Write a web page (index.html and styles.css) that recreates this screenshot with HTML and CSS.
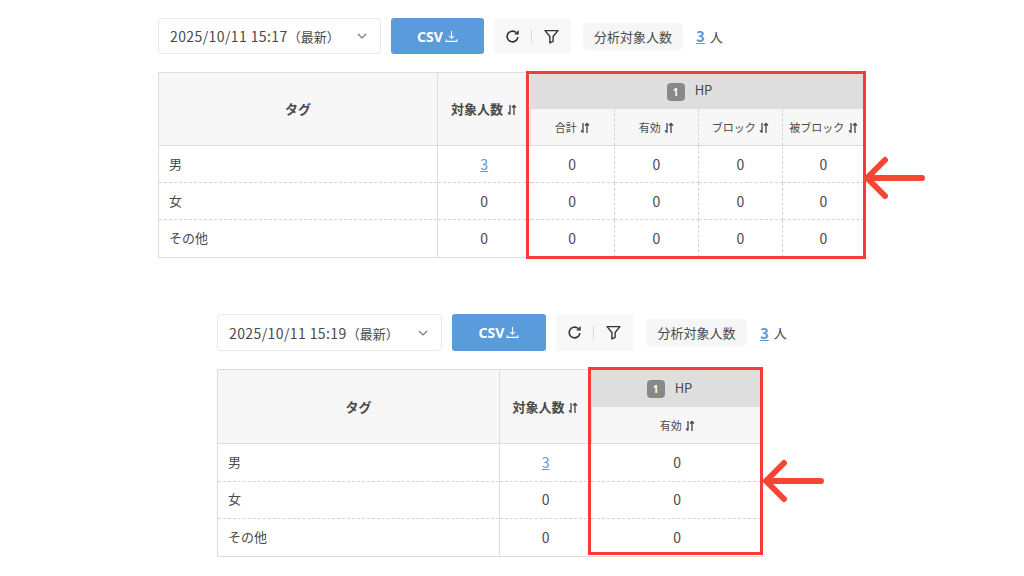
FILE: index.html
```html
<!DOCTYPE html>
<html lang="ja">
<head>
<meta charset="utf-8">
<title>タグ分析</title>
<link rel="stylesheet" href="styles.css">
</head>
<body>
<svg class="defs" aria-hidden="true">
  <symbol id="sort" viewBox="0 0 10 12"><path d="M3 1v9.500M1 8.500l2 2M7 11V1.500M5 3.500l2-2 2 2" fill="none" stroke="currentColor" stroke-width="1.300"/></symbol>
  <symbol id="dl" viewBox="0 0 12 12"><path d="M6 1v6.500M3.800 5.500L6 7.700l2.200-2.200M1 8.500v2h10v-2" fill="none" stroke="currentColor" stroke-width="1"/></symbol>
  <symbol id="chev" viewBox="0 0 10 6"><path d="M1 1l4 4 4-4" fill="none" stroke="currentColor" stroke-width="1.200"/></symbol>
  <symbol id="reload" viewBox="0 0 14 14"><path d="M12 7.500A5 5 0 1 1 10.300 3.200" fill="none" stroke="currentColor" stroke-width="1.500"/><path d="M12.800 1v4.200H8.600z" fill="currentColor"/></symbol>
  <symbol id="filter" viewBox="0 0 14 14"><path d="M1 1.500h12L8.500 7v4.500l-3 1.500V7z" fill="none" stroke="currentColor" stroke-width="1.300" stroke-linejoin="round"/></symbol>
</svg>

<main class="page">
  <section class="panel panel-a">
    <div class="toolbar">
      <div class="select"><span class="date">2025/10/11 15:17<span class="latest">（最新）</span></span><svg class="chev"><use href="#chev"/></svg></div>
      <button class="csv">CSV<svg class="dl"><use href="#dl"/></svg></button>
      <div class="tools"><svg class="tool"><use href="#reload"/></svg><i class="sep"></i><svg class="tool"><use href="#filter"/></svg></div>
      <div class="pill">分析対象人数</div>
      <div class="count"><a class="link">3</a><span>人</span></div>
    </div>
    <table class="grid">
      <colgroup><col class="c-tag"><col class="c-num"><col class="c-m"><col class="c-m"><col class="c-m"><col class="c-last"></colgroup>
      <thead>
        <tr class="r-group">
          <th rowspan="2" class="head tag-head">タグ</th>
          <th rowspan="2" class="head num-head">対象人数 <svg class="sort"><use href="#sort"/></svg></th>
          <th colspan="4" class="group"><span class="badge">1</span><span>HP</span></th>
        </tr>
        <tr class="r-sub">
          <th class="sub">合計 <svg class="sort"><use href="#sort"/></svg></th>
          <th class="sub">有効 <svg class="sort"><use href="#sort"/></svg></th>
          <th class="sub">ブロック <svg class="sort"><use href="#sort"/></svg></th>
          <th class="sub">被ブロック <svg class="sort"><use href="#sort"/></svg></th>
        </tr>
      </thead>
      <tbody>
        <tr><td class="name">男</td><td class="solid"><a class="link">3</a></td><td>0</td><td>0</td><td>0</td><td>0</td></tr>
        <tr><td class="name">女</td><td class="solid">0</td><td>0</td><td>0</td><td>0</td><td>0</td></tr>
        <tr><td class="name">その他</td><td class="solid">0</td><td>0</td><td>0</td><td>0</td><td>0</td></tr>
      </tbody>
    </table>
    <div class="mark mark-a"></div>
    <svg class="arrow arrow-a" viewBox="0 0 64 44"><path d="M60 23H5M23 5L5 23l18 18" fill="none" stroke="#f74535" stroke-width="6" stroke-linecap="round" stroke-linejoin="round"/></svg>
  </section>

  <section class="panel panel-b">
    <div class="toolbar">
      <div class="select"><span class="date">2025/10/11 15:19<span class="latest">（最新）</span></span><svg class="chev"><use href="#chev"/></svg></div>
      <button class="csv">CSV<svg class="dl"><use href="#dl"/></svg></button>
      <div class="tools"><svg class="tool"><use href="#reload"/></svg><i class="sep"></i><svg class="tool"><use href="#filter"/></svg></div>
      <div class="pill">分析対象人数</div>
      <div class="count"><a class="link">3</a><span>人</span></div>
    </div>
    <table class="grid">
      <colgroup><col class="c-tag"><col class="c-num"><col class="c-hp"></colgroup>
      <thead>
        <tr class="r-group">
          <th rowspan="2" class="head tag-head">タグ</th>
          <th rowspan="2" class="head num-head">対象人数 <svg class="sort"><use href="#sort"/></svg></th>
          <th class="group"><span class="badge">1</span><span>HP</span></th>
        </tr>
        <tr class="r-sub"><th class="sub">有効 <svg class="sort"><use href="#sort"/></svg></th></tr>
      </thead>
      <tbody>
        <tr><td class="name">男</td><td class="solid"><a class="link">3</a></td><td>0</td></tr>
        <tr><td class="name">女</td><td class="solid">0</td><td>0</td></tr>
        <tr><td class="name">その他</td><td class="solid">0</td><td>0</td></tr>
      </tbody>
    </table>
    <div class="mark mark-b"></div>
    <svg class="arrow arrow-b" viewBox="0 0 64 44"><path d="M60 23H5M23 5L5 23l18 18" fill="none" stroke="#f74535" stroke-width="6" stroke-linecap="round" stroke-linejoin="round"/></svg>
  </section>
</main>
</body>
</html>
```
FILE: styles.css
```css
* { box-sizing: border-box; }
html, body { margin: 0; padding: 0; background: #fff; }
body {
  width: 1024px;
  height: 576px;
  overflow: hidden;
  font-family: "Noto Sans CJK JP", "Noto Sans", sans-serif;
  color: #4a4a4a;
  font-size: 14px;
}
.defs { position: absolute; width: 0; height: 0; }

.page { display: flex; flex-direction: column; align-items: flex-start; padding-top: 18px; }
.panel { position: relative; }
.panel-a { margin-left: 158px; }
.panel-b { margin-left: 217px; margin-top: 56px; }

.toolbar { display: flex; align-items: center; height: 36px; margin-bottom: 18px; }
.toolbar > * { flex: none; }
.panel-b .toolbar { height: 37px; }

.select {
  display: flex;
  align-items: center;
  justify-content: space-between;
  height: 100%;
  background: #fff;
  border: 1px solid #e8e8e8;
  border-radius: 4px;
  padding: 0 13px 0 11px;
  white-space: nowrap;
}
.date { letter-spacing: 0.4px; }
.latest { font-size: 13px; letter-spacing: 0; }
.panel-a .select { width: 223px; }
.panel-b .select { width: 225px; }
.chev { width: 10px; height: 6px; color: #777; }

.csv {
  display: flex;
  align-items: center;
  justify-content: center;
  height: 100%;
  border: 0;
  border-radius: 3px;
  background: #5a9bdc;
  color: #fff;
  font: 700 14px "Noto Sans", sans-serif;
  margin-left: 10px;
  padding: 0;
}
.panel-a .csv { width: 93px; }
.panel-b .csv { width: 94px; }
.dl { width: 13px; height: 13px; margin-left: 2px; }

.tools {
  display: flex;
  align-items: center;
  width: 77px;
  height: 100%;
  background: #f8f8f8;
  margin-left: 10px;
  padding-left: 11px;
}
.tool { width: 15px; height: 15px; color: #333; }
.sep { width: 1px; height: 13px; background: #d8d8d8; margin: 0 12px 0 11px; }

.pill {
  display: flex;
  align-items: center;
  justify-content: center;
  height: 27px;
  background: #f6f6f6;
  border-radius: 4px;
  font-size: 13px;
}
.panel-a .pill { width: 100px; margin-left: 12px; }
.panel-b .pill { width: 101px; margin-left: 13px; }

.count { display: flex; align-items: center; gap: 5px; margin-left: 13px; font-size: 13px; }
.count .link { font-size: 15px; font-weight: 700; line-height: 18px; }
.link { color: #5a9bdc; text-decoration: underline; }

.grid {
  table-layout: fixed;
  border-collapse: collapse;
  border: 1.500px solid #ddd;
  font-size: 14px;
}
.panel-a .grid { width: 706px; }
.panel-b .grid { width: 544px; }
.panel-a .c-tag { width: 279px; }
.panel-a .c-num { width: 93px; }
.panel-a .c-m { width: 84px; }
.panel-a .c-last { width: 82px; }
.panel-b .c-tag { width: 282px; }
.panel-b .c-num { width: 92px; }
.panel-b .c-hp { width: 170px; }

.r-group { height: 36px; }
.r-sub { height: 37px; }
.panel-b .r-group { height: 37px; }
tbody tr { height: 37px; }
.panel-b tbody tr { height: 37.500px; }
.panel-a tbody tr:last-child { height: 38px; }

th, td { padding: 0; text-align: center; font-weight: 400; }
.head {
  background: #f7f7f7;
  border-right: 1px solid #ddd;
  border-bottom: 1.500px solid #ddd;
  font-weight: 700;
  font-size: 13px;
  padding-bottom: 1px;
}
.group { background: #dedede; font-size: 13px; }
.panel-a .group { padding-right: 16px; }
.panel-b .group { padding-right: 14px; }
.badge {
  display: inline-block;
  width: 18px;
  height: 18px;
  border-radius: 4px;
  background: #888;
  color: #fff;
  font: 700 10px/18px "Noto Sans", sans-serif;
  margin-right: 10px;
  vertical-align: middle;
}
.sub {
  background: #f7f7f7;
  border-top: 1px solid #ddd;
  border-right: 1px dashed #d5d5d5;
  border-bottom: 1.500px solid #ddd;
  font-size: 11px;
  white-space: nowrap;
}
.sub:last-child { border-right: 0; }
.sort { width: 10px; height: 12px; margin-left: 1px; vertical-align: -2px; color: #444; }
.panel-b .sub, .panel-b td:last-child { padding-left: 2px; }

td { border-right: 1px dashed #d5d5d5; border-bottom: 1px dashed #d5d5d5; padding-bottom: 1px; }
td:last-child { border-right: 0; }
tbody tr:last-child td { border-bottom: 0; }
td.name { text-align: left; padding-left: 10px; border-right: 1px solid #ddd; font-size: 13px; padding-bottom: 2px; }
td.solid { border-right: 0; }

.mark {
  position: absolute;
  border: 3px solid #f93a3a;
  pointer-events: none;
}
.mark-a { left: 368px; top: 53px; width: 340px; height: 188px; }
.mark-b { left: 371px; top: 53px; width: 175px; height: 188px; }

.arrow { position: absolute; width: 64px; height: 44px; }
.arrow-a { left: 704px; top: 137px; }
.arrow-b { left: 544px; top: 144px; }
```
